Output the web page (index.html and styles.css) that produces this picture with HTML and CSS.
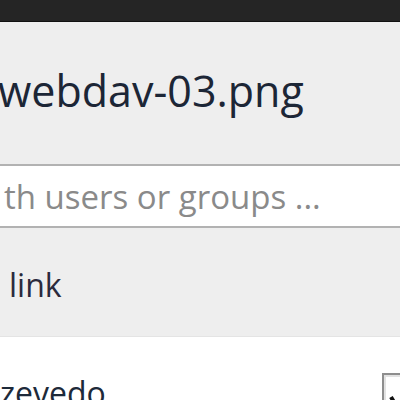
FILE: index.html
```html
<!DOCTYPE html>
<html>
<head>
<meta charset="utf-8">
<link rel="stylesheet" href="styles.css">
</head>
<body>
<div class="titlebar"></div>
<div class="panel">
  <div class="filename">webdav-03.png</div>
  <div class="search"><span class="placeholder">th users or groups ...</span></div>
  <div class="linkrow"><span class="linklabel">link</span></div>
</div>
<div class="shares">
  <div class="share-row">
    <span class="user">zevedo</span>
    <span class="checkbox"><svg class="tick" width="30" height="30" viewBox="0 0 30 30"><path d="M3 12 L10 24 L26 2" fill="none" stroke="#111" stroke-width="4"/></svg></span>
  </div>
</div>
</body>
</html>
```
FILE: styles.css
```css
html, body {
  margin: 0;
  padding: 0;
  width: 400px;
  height: 400px;
  overflow: hidden;
  background: #ffffff;
  font-family: "Open Sans", "Noto Sans", sans-serif;
}
.titlebar {
  height: 21px;
  background: #252525;
  border-bottom: 1px solid #111111;
  box-shadow: 0 1px 0 #8a8a8a, 0 2px 0 #c8c8c8;
}
.panel {
  background: #eeeeee;
  height: 314px;
  border-bottom: 1px solid #e4e4e4;
  overflow: hidden;
}
.filename {
  margin-top: 39px;
  margin-left: -2px;
  font-size: 43px;
  line-height: 60px;
  color: #1c2636;
  white-space: nowrap;
}
.search {
  margin-top: 43px;
  height: 60px;
  background: #ffffff;
  border-top: 2px solid #b2b2b2;
  border-bottom: 2px solid #b2b2b2;
  display: flex;
  align-items: center;
}
.placeholder {
  padding-left: 4px;
  font-size: 33px;
  color: #8a8a8a;
  white-space: nowrap;
}
.linkrow {
  margin-top: 36px;
  display: flex;
  align-items: center;
  height: 40px;
  white-space: nowrap;
}
.linklabel {
  padding-left: 9px;
  font-size: 32px;
  color: #2a2a3c;
}
.shares {
  background: #ffffff;
}
.share-row {
  margin-top: 36px;
  display: flex;
  justify-content: space-between;
  align-items: flex-start;
}
.user {
  font-size: 32px;
  color: #1d2a3a;
  line-height: 40px;
}
.checkbox {
  margin-top: 0;
  margin-right: -20px;
  width: 38px;
  height: 38px;
  border: 2px solid #8e8e8e;
  box-shadow: inset 0 0 0 2px #e2e2e2;
  background: #ffffff;
  box-sizing: border-box;
  padding: 10px 0 0 4px;
}
.tick {
  display: block;
}
```
